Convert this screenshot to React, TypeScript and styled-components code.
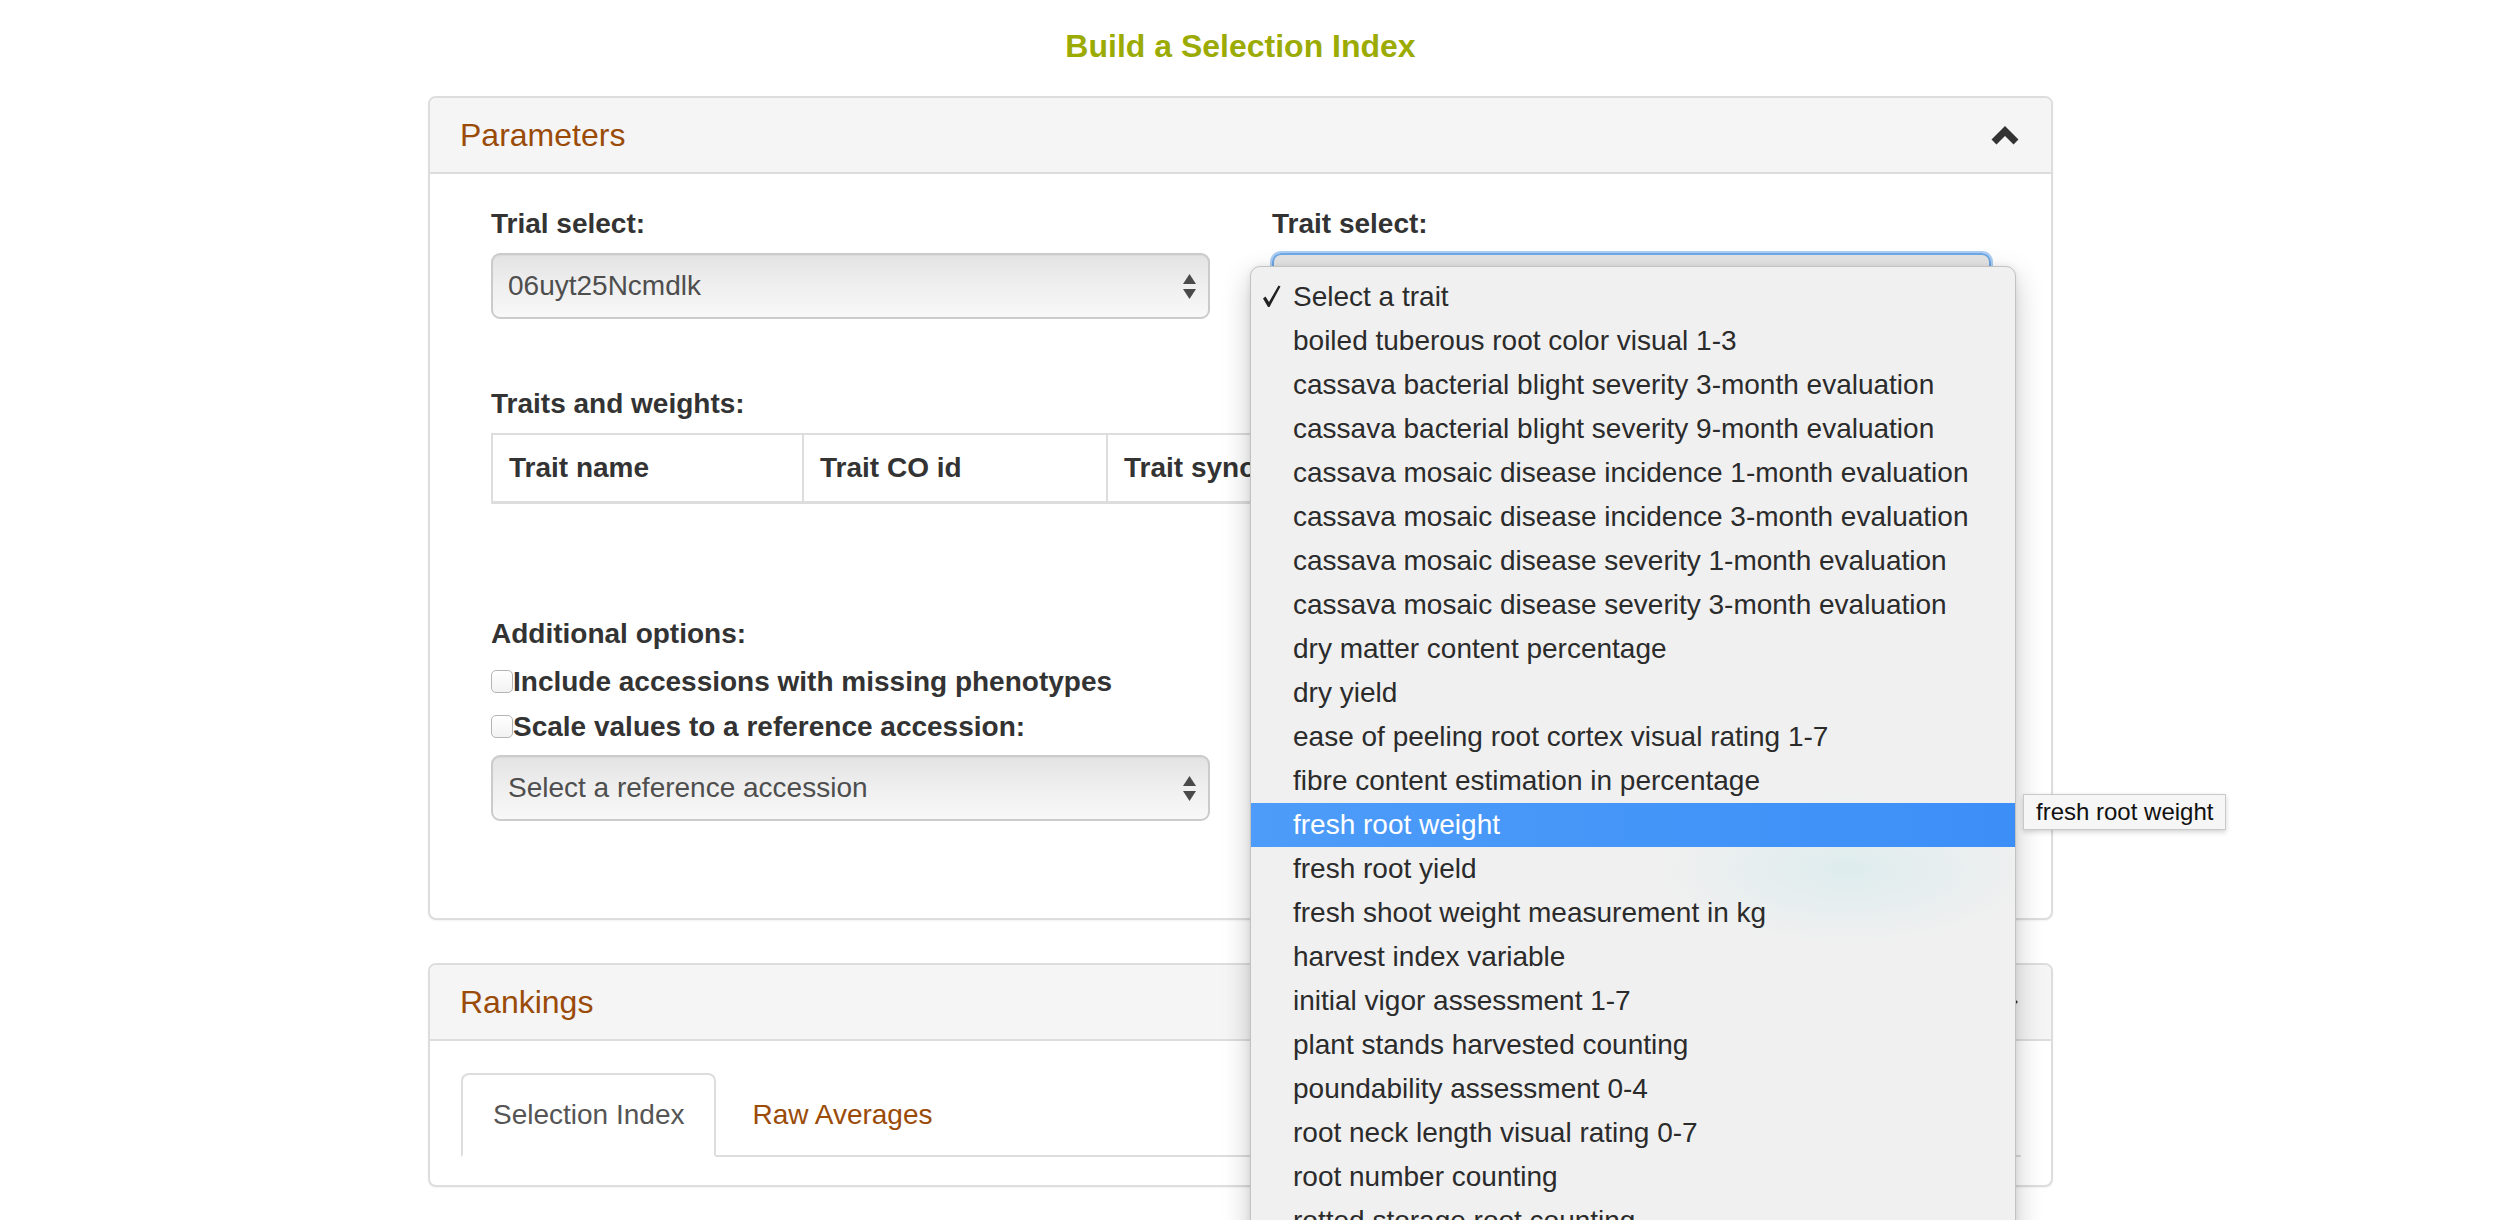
import React from "react";
import styled, { createGlobalStyle } from "styled-components";

const GlobalStyle = createGlobalStyle`
  html, body { margin: 0; padding: 0; background: #fff; overflow: hidden; }
  body { font-family: "Liberation Sans", Arial, Helvetica, sans-serif; color: #333; }
  * { box-sizing: border-box; }
`;

const BROWN = "#9a4b08";

const Page = styled.div`
  width: 1625px;
  margin-left: 428px;
  padding-top: 29px;
`;

const Title = styled.h1`
  margin: 0 0 32px;
  text-align: center;
  font-size: 32px;
  line-height: 35px;
  font-weight: 700;
  color: #9bab03;
`;

const Panel = styled.section`
  border: 2px solid #ddd;
  border-radius: 8px;
  background: #fff;
  margin-bottom: 43px;
  box-shadow: 0 1px 2px rgba(0, 0, 0, 0.05);
`;

const PanelHeading = styled.div`
  display: flex;
  align-items: center;
  justify-content: space-between;
  height: 76px;
  padding: 0 31px 0 30px;
  background: #f5f5f5;
  border-bottom: 2px solid #ddd;
  border-radius: 6px 6px 0 0;
`;

const PanelTitle = styled.h3`
  margin: 0;
  font-size: 32px;
  line-height: 35px;
  font-weight: 400;
  color: ${BROWN};
`;

const ParamsBody = styled.div`
  padding: 30px 60px 97px 61px;
`;

const RankBody = styled.div`
  padding: 32px 30px 28px 31px;
`;

const FieldGrid = styled.div`
  display: grid;
  grid-template-columns: 1fr 1fr;
  column-gap: 62px;
`;

const Field = styled.div`
  position: relative;
`;

const FieldLabel = styled.div<{ $top?: number }>`
  margin-top: ${(p) => p.$top ?? 0}px;
  font-size: 28px;
  font-weight: 700;
  line-height: 40px;
  color: #333;
`;

const SelectBox = styled.div<{ $focused?: boolean; $top?: number; $narrow?: boolean }>`
  display: flex;
  align-items: center;
  justify-content: space-between;
  width: ${(p) => (p.$narrow ? "719px" : "100%")};
  height: 66px;
  margin-top: ${(p) => p.$top ?? 9}px;
  padding: 0 12px 0 15px;
  border: 2px solid ${(p) => (p.$focused ? "#6ea8e6" : "#cbcbcb")};
  border-radius: 9px;
  background: linear-gradient(#e3e3e3, #eeeeee 45%, #f8f8f8);
  box-shadow: ${(p) =>
    p.$focused ? "0 0 0 2px rgba(104, 164, 232, 0.55)" : "inset 0 1px 1px rgba(0,0,0,0.04)"};
  font-size: 28px;
  color: #4e4e4e;
`;

const Table = styled.table`
  width: 100%;
  margin-top: 9px;
  border-collapse: collapse;
  font-size: 28px;
`;

const Th = styled.th<{ $w?: number }>`
  width: ${(p) => (p.$w ? `${p.$w}px` : "auto")};
  text-align: left;
  padding: 16px;
  line-height: 34px;
  font-weight: 700;
  color: #333;
  border: 2px solid #ddd;
  border-bottom-width: 3px;
  white-space: nowrap;
`;

const OptionRow = styled.label<{ $first?: boolean }>`
  display: flex;
  align-items: center;
  height: 45px;
  margin-top: ${(p) => (p.$first ? 5 : 0)}px;
  font-size: 28px;
  font-weight: 700;
  line-height: 40px;
  color: #333;
`;

const CheckBox = styled.input`
  appearance: none;
  -webkit-appearance: none;
  flex: none;
  width: 22px;
  height: 23px;
  margin: 0;
  border: 1.5px solid #b4b4b4;
  border-radius: 5px;
  background: linear-gradient(#ffffff, #f2f2f2);
`;

const TabList = styled.div`
  display: flex;
  border-bottom: 2px solid #ddd;
`;

const Tab = styled.div<{ $active?: boolean }>`
  margin: 0 4px -2px 0;
  padding: 20px 30px;
  font-size: 28px;
  line-height: 40px;
  border: 2px solid ${(p) => (p.$active ? "#ddd" : "transparent")};
  border-bottom-color: ${(p) => (p.$active ? "#fff" : "transparent")};
  border-radius: 8px 8px 0 0;
  background: ${(p) => (p.$active ? "#fff" : "transparent")};
  color: ${(p) => (p.$active ? "#555" : BROWN)};
`;

const Menu = styled.ul`
  position: absolute;
  z-index: 10;
  left: -22px;
  top: 62px;
  width: 766px;
  margin: 0;
  padding: 8px 0 40px;
  list-style: none;
  background: radial-gradient(ellipse 190px 75px at 596px 602px, rgba(222, 236, 238, 1), rgba(240, 240, 240, 0) 100%), #f0f0f0;
  border: 1px solid #c2c2c2;
  border-radius: 10px;
  box-shadow: 0 10px 28px rgba(0, 0, 0, 0.22), 0 0 6px rgba(0, 0, 0, 0.08);
`;

const MenuItem = styled.li<{ $active?: boolean }>`
  position: relative;
  height: 44px;
  padding-left: 42px;
  font-size: 28px;
  line-height: 44px;
  white-space: nowrap;
  color: ${(p) => (p.$active ? "#fff" : "#2b2b2b")};
  background: ${(p) => (p.$active ? "linear-gradient(90deg, #4d9cf9, #3d8ff8)" : "transparent")};
`;

const CheckIcon = styled.svg`
  position: absolute;
  left: 11px;
  top: 10px;
`;

const Tooltip = styled.div`
  position: absolute;
  left: 772px;
  top: 527px;
  height: 36px;
  padding: 0 12px;
  font-size: 24px;
  line-height: 34px;
  color: #111;
  white-space: nowrap;
  background: #f6f6f6;
  border: 1px solid #c9c9c9;
  box-shadow: 0 2px 5px rgba(0, 0, 0, 0.18);
`;

const ChevronUp = () => (
  <svg width="30" height="22" viewBox="0 0 30 22" aria-hidden>
    <path d="M4 18 L15 7 L26 18" fill="none" stroke="#333" strokeWidth="7" strokeLinejoin="miter" />
  </svg>
);

const ChevronRight = () => (
  <svg width="22" height="30" viewBox="0 0 22 30" aria-hidden>
    <path d="M4 4 L15 15 L4 26" fill="none" stroke="#333" strokeWidth="7" strokeLinejoin="miter" />
  </svg>
);

const UpDown = () => (
  <svg width="13" height="25" viewBox="0 0 13 25" aria-hidden>
    <path d="M0 10 L6.5 0 L13 10 Z" fill="#4a4a4a" />
    <path d="M0 15 L13 15 L6.5 25 Z" fill="#4a4a4a" />
  </svg>
);

const Check = () => (
  <CheckIcon width="19" height="23" viewBox="0 0 19 23" aria-hidden>
    <path d="M1 13.5 L3.5 11.5 L7 17 L16.5 0.5 L18.5 1.5 L7.5 22 L6 22 Z" fill="#222" />
  </CheckIcon>
);

const traits = [
  "Select a trait",
  "boiled tuberous root color visual 1-3",
  "cassava bacterial blight severity 3-month evaluation",
  "cassava bacterial blight severity 9-month evaluation",
  "cassava mosaic disease incidence 1-month evaluation",
  "cassava mosaic disease incidence 3-month evaluation",
  "cassava mosaic disease severity 1-month evaluation",
  "cassava mosaic disease severity 3-month evaluation",
  "dry matter content percentage",
  "dry yield",
  "ease of peeling root cortex visual rating 1-7",
  "fibre content estimation in percentage",
  "fresh root weight",
  "fresh root yield",
  "fresh shoot weight measurement in kg",
  "harvest index variable",
  "initial vigor assessment 1-7",
  "plant stands harvested counting",
  "poundability assessment 0-4",
  "root neck length visual rating 0-7",
  "root number counting",
  "rotted storage root counting",
  "sprouting proportion",
  "starch content percentage",
];

export default function App() {
  return (
    <>
      <GlobalStyle />
      <Page>
        <Title>Build a Selection Index</Title>

        <Panel>
          <PanelHeading>
            <PanelTitle>Parameters</PanelTitle>
            <ChevronUp />
          </PanelHeading>
          <ParamsBody>
            <FieldGrid>
              <Field>
                <FieldLabel>Trial select:</FieldLabel>
                <SelectBox>
                  <span>06uyt25Ncmdlk</span>
                  <UpDown />
                </SelectBox>
              </Field>
              <Field>
                <FieldLabel>Trait select:</FieldLabel>
                <SelectBox $focused>
                  <span>Select a trait</span>
                  <UpDown />
                </SelectBox>
                <Menu>
                  {traits.map((t, i) => (
                    <MenuItem key={t} $active={i === 12}>
                      {i === 0 && <Check />}
                      {t}
                    </MenuItem>
                  ))}
                  <Tooltip>fresh root weight</Tooltip>
                </Menu>
              </Field>
            </FieldGrid>

            <FieldLabel $top={65}>Traits and weights:</FieldLabel>
            <Table>
              <thead>
                <tr>
                  <Th $w={311}>Trait name</Th>
                  <Th $w={304}>Trait CO id</Th>
                  <Th $w={420}>Trait synonyms</Th>
                  <Th>Weight</Th>
                </tr>
              </thead>
              <tbody />
            </Table>

            <FieldLabel $top={110}>Additional options:</FieldLabel>
            <OptionRow $first>
              <CheckBox type="checkbox" readOnly />
              Include accessions with missing phenotypes
            </OptionRow>
            <OptionRow>
              <CheckBox type="checkbox" readOnly />
              Scale values to a reference accession:
            </OptionRow>
            <SelectBox $narrow $top={6}>
              <span>Select a reference accession</span>
              <UpDown />
            </SelectBox>
          </ParamsBody>
        </Panel>

        <Panel>
          <PanelHeading>
            <PanelTitle>Rankings</PanelTitle>
            <ChevronRight />
          </PanelHeading>
          <RankBody>
            <TabList>
              <Tab $active>Selection Index</Tab>
              <Tab>Raw Averages</Tab>
            </TabList>
          </RankBody>
        </Panel>
      </Page>
    </>
  );
}
